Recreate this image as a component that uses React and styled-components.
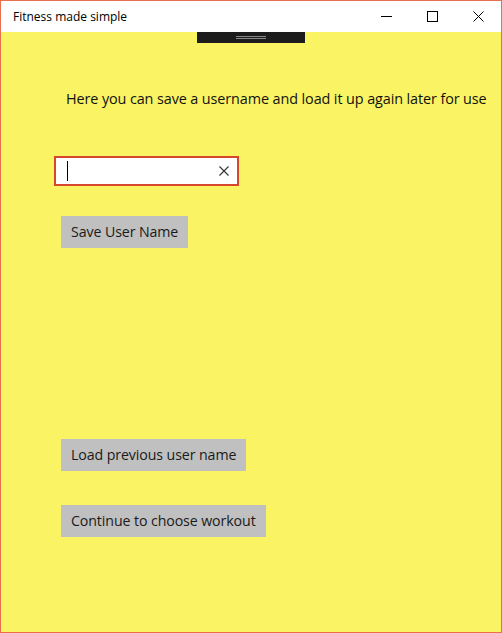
import React from 'react'
import styled, { createGlobalStyle } from 'styled-components'

const Global = createGlobalStyle`
  html, body { margin: 0; padding: 0; }
  body {
    font-family: "Segoe UI", "Open Sans", "Noto Sans", sans-serif;
    background: #fff;
  }
`

const Window = styled.div`
  width: 502px;
  height: 633px;
  box-sizing: border-box;
  border: 1px solid #e8704f;
  display: flex;
  flex-direction: column;
  overflow: hidden;
`

const TitleBar = styled.div`
  height: 31px;
  flex: none;
  background: #fff;
  display: flex;
  align-items: center;
  padding-left: 12px;
`

const Title = styled.div`
  flex: 1;
  font-size: 12px;
  color: #000;
  margin-top: -1px;
`

const Caption = styled.div`
  width: 46px;
  height: 31px;
  display: flex;
  align-items: center;
  justify-content: center;
`

const Content = styled.div`
  flex: 1;
  background: #faf464;
  display: flex;
  flex-direction: column;
  align-items: flex-start;
`

const Handle = styled.div`
  margin-left: 196px;
  width: 108px;
  height: 11px;
  background: #1c1c1c;
  display: flex;
  flex-direction: column;
  align-items: center;
  justify-content: center;
  gap: 1px;
  span {
    display: block;
    width: 30px;
    height: 1px;
    background: #8a8a8a;
  }
`

const Intro = styled.p`
  margin: 46px 0 0 65px;
  font-size: 14.4px;
  color: #111;
  letter-spacing: -0.1px;
`

const TextBox = styled.div`
  margin: 48px 0 0 53px;
  width: 185px;
  height: 30px;
  box-sizing: border-box;
  border: 2px solid #d5482c;
  background: #fff;
  display: flex;
  align-items: center;
  padding: 0 8px 0 11px;
`

const Caret = styled.div`
  width: 1px;
  height: 20px;
  background: #000;
  flex: none;
`

const Spacer = styled.div`
  flex: 1;
`

const Button = styled.div`
  margin: ${({ $top }) => $top}px 0 0 60px;
  height: 32px;
  padding: 0 10px;
  background: #c0c0c0;
  color: #1a1a1a;
  font-size: 14.2px;
  letter-spacing: -0.1px;
  display: flex;
  align-items: center;
  box-sizing: border-box;
  padding-bottom: 1px;
`

const Close = () => (
  <svg width="11" height="11" viewBox="0 0 11 11">
    <path d="M0.5 0.5 L10.5 10.5 M10.5 0.5 L0.5 10.5" stroke="#000" strokeWidth="1" />
  </svg>
)

export default function App() {
  return (
    <>
      <Global />
      <Window>
        <TitleBar>
          <Title>Fitness made simple</Title>
          <Caption>
            <svg width="11" height="11" viewBox="0 0 11 11">
              <path d="M0 5.5 H11" stroke="#000" strokeWidth="1" />
            </svg>
          </Caption>
          <Caption>
            <svg width="11" height="11" viewBox="0 0 11 11">
              <rect x="0.5" y="0.5" width="10" height="10" fill="none" stroke="#000" strokeWidth="1" />
            </svg>
          </Caption>
          <Caption>
            <Close />
          </Caption>
        </TitleBar>
        <Content>
          <Handle>
            <span />
            <span />
          </Handle>
          <Intro>Here you can save a username and load it up again later for use</Intro>
          <TextBox>
            <Caret />
            <Spacer />
            <svg width="10" height="10" viewBox="0 0 10 10">
              <path d="M0.5 0.5 L9.5 9.5 M9.5 0.5 L0.5 9.5" stroke="#333" strokeWidth="1.1" />
            </svg>
          </TextBox>
          <Button $top={30}>Save User Name</Button>
          <Button $top={191}>Load previous user name</Button>
          <Button $top={34}>Continue to choose workout</Button>
        </Content>
      </Window>
    </>
  )
}
